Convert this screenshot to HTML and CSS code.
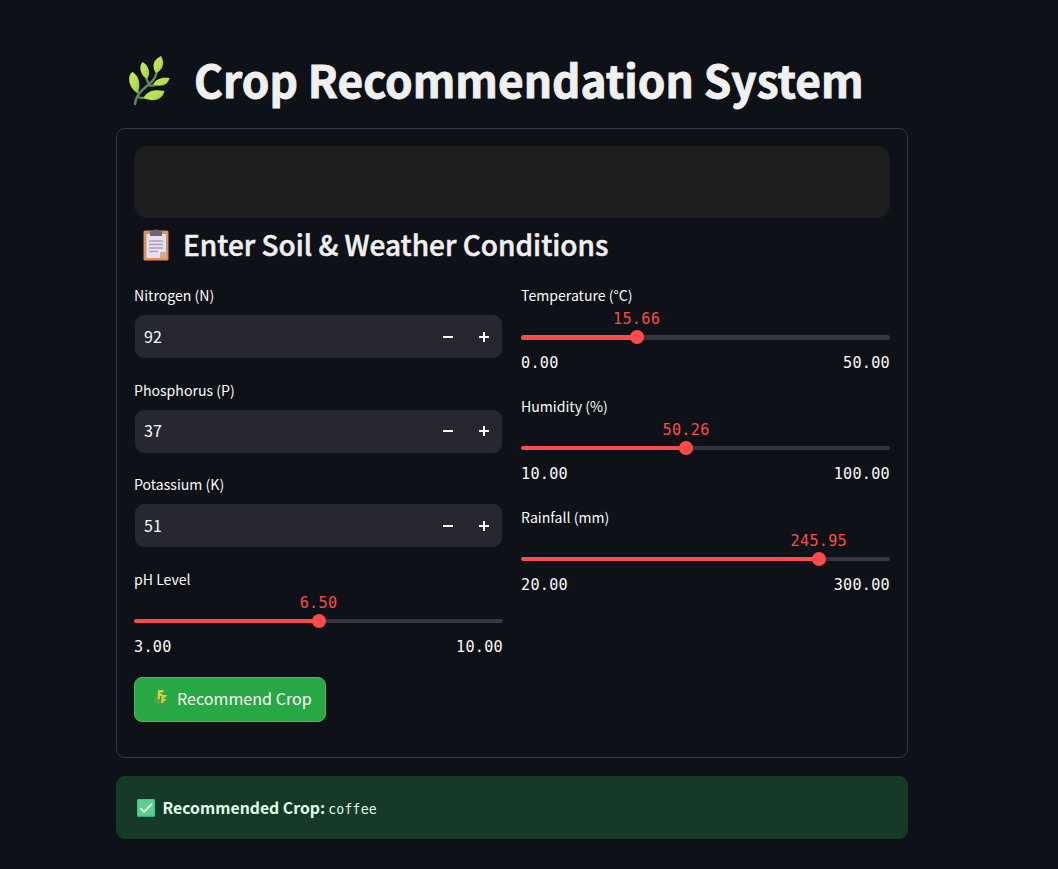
FILE: index.html
```html
<!DOCTYPE html>
<html lang="en">
<head>
<meta charset="utf-8">
<title>Crop Recommendation System</title>
<link rel="stylesheet" href="styles.css">
</head>
<body>
<main class="page">
  <header class="title">
    <svg class="title-icon" viewBox="0 0 42 50" aria-hidden="true">
      <defs>
        <linearGradient id="leaf" x1="0" y1="0" x2="1" y2="1"><stop offset="0" stop-color="#c4ea60"/><stop offset=".6" stop-color="#b4e050"/><stop offset="1" stop-color="#8cc83c"/></linearGradient>
      </defs>
      <g fill="none" stroke="#5f8761" stroke-width="2.4" stroke-linecap="round">
        <path d="M7 48C8 39 14 34 20 29C26 25 28 20 29 15"/>
        <path d="M11 38Q10 37 9 34M21 28Q19 25 18 21M20 29Q25 31 29 28M10 41Q14 43 18 41"/>
      </g>
      <g fill="url(#leaf)">
        <path d="M4.500 16C-1 19 0 31 9 37C13 32 12 20 4.500 16Z"/>
        <path d="M14.500 6C10 11 13 20 19 23C23 18 21 9 14.500 6Z"/>
        <path d="M33 0C24 4 24 12 28 17C35 14 37 7 33 0Z"/>
        <path d="M41.500 22C33 21 28 23 25 28.500C32 31 40 30 41.500 22Z"/>
        <path d="M36.500 35C26 33 19 35 15.500 42C24 46 34 45 36.500 35Z"/>
      </g>
    </svg>
    <h1 class="title-text">Crop Recommendation System</h1>
  </header>

  <section class="card">
    <div class="banner"></div>
    <div class="subtitle">
      <svg class="subtitle-icon" viewBox="0 0 26 32" aria-hidden="true">
        <rect x=".5" y="1.5" width="25" height="30" rx="1.5" fill="#d99262"/>
        <path d="M3.5 5H23V23L17 29H3.500Z" fill="#e6e0ef"/>
        <path d="M23 23L17 29V23Z" fill="#c3acbd"/>
        <path d="M17 29.500L23.500 23V29.500Z" fill="#eda568"/>
        <path d="M7 3.500Q7 2 9 2H11Q11 .3 13 .3T15 2H17Q19 2 19 3.500V7H7Z" fill="#68647a"/>
        <path d="M6 12H20M6 15.500H20M6 19H20M6 22.500H15" stroke="#a8a1b9" stroke-width="1.300"/>
      </svg>
      <h2 class="subtitle-text">Enter Soil &amp; Weather Conditions</h2>
    </div>

    <div class="columns">
      <div class="column">
        <div class="number">
          <div class="label">Nitrogen (N)</div>
          <div class="number-box"><span class="number-value">92</span><i class="step minus"></i><i class="step plus"></i></div>
        </div>
        <div class="number">
          <div class="label">Phosphorus (P)</div>
          <div class="number-box"><span class="number-value">37</span><i class="step minus"></i><i class="step plus"></i></div>
        </div>
        <div class="number">
          <div class="label">Potassium (K)</div>
          <div class="number-box"><span class="number-value">51</span><i class="step minus"></i><i class="step plus"></i></div>
        </div>
        <div class="slider" style="--pos:50%">
          <div class="label">pH Level</div>
          <div class="track"><span class="value">6.50</span><i class="thumb"></i></div>
          <div class="range"><span>3.00</span><span>10.00</span></div>
        </div>
      </div>
      <div class="column">
        <div class="slider" style="--pos:31.32%">
          <div class="label">Temperature (°C)</div>
          <div class="track"><span class="value">15.66</span><i class="thumb"></i></div>
          <div class="range"><span>0.00</span><span>50.00</span></div>
        </div>
        <div class="slider" style="--pos:44.73%">
          <div class="label">Humidity (%)</div>
          <div class="track"><span class="value">50.26</span><i class="thumb"></i></div>
          <div class="range"><span>10.00</span><span>100.00</span></div>
        </div>
        <div class="slider" style="--pos:80.7%">
          <div class="label">Rainfall (mm)</div>
          <div class="track"><span class="value">245.95</span><i class="thumb"></i></div>
          <div class="range"><span>20.00</span><span>300.00</span></div>
        </div>
      </div>
    </div>

    <button class="submit">
      <svg class="submit-icon" viewBox="0 0 14 19" aria-hidden="true">
        <path d="M4.500 16V9M1.500 9V14" fill="none" stroke="#6f9e4c" stroke-width="1.800"/>
        <path d="M9 18V11M12 12V15Q12 16 9 17" fill="none" stroke="#4a8f70" stroke-width="2"/>
        <path d="M4 1H10L9 3.500H6.500V5H9L8 7H6V10H3.500Z" fill="#dcc944"/>
        <path d="M7.500 6H13L12 8.500H10V10H12L11 12H9.500V14H7Z" fill="#d9c83c"/>
      </svg>
      <span class="submit-text">Recommend Crop</span>
    </button>
  </section>

  <section class="alert">
    <svg class="alert-icon" viewBox="0 0 18 18" aria-hidden="true">
      <rect width="18" height="18" rx="1.500" fill="#3da978"/>
      <rect x=".5" y=".3" width="17" height="16.500" rx="1.200" fill="#58d092"/>
      <path d="M3.500 9.200L7 13L15 4.800" fill="none" stroke="#f4fff5" stroke-width="1.800"/>
    </svg>
    <strong class="alert-title">Recommended Crop:</strong>
    <code class="alert-value">coffee</code>
  </section>
</main>
</body>
</html>
```
FILE: styles.css
```css
* { box-sizing: border-box; }
body {
  margin: 0;
  background: #0e1117;
  color: #fafafa;
  font-family: "Noto Sans CJK SC", "Noto Sans", sans-serif;
  font-size: 14px;
}
h1, h2 { margin: 0; }
svg { display: block; flex: none; }
.page { width: 792px; margin-left: 116px; padding-top: 48px; height: 869px; overflow: hidden; }

.title { display: flex; align-items: center; height: 80px; padding-left: 12px; gap: 24px; color: #f0f0f0; }
.title-icon { width: 42px; height: 50px; margin-top: -15px; }
.title-text {
  font-size: 44.2px; font-weight: 700; line-height: 64px; margin-top: -19px;
  white-space: nowrap; -webkit-text-stroke: .9px #f0f0f0;
}

.card { height: 630px; padding: 17px; border: 1px solid #383a42; border-radius: 9px; }
.banner { height: 72px; background: #1e1e1e; border-radius: 14px; }
.subtitle { display: flex; align-items: center; height: 54px; padding-left: 9px; gap: 14px; color: #f0f0f0; }
.subtitle-icon { width: 26px; height: 32px; margin-top: -1px; }
.subtitle-text {
  font-size: 28px; font-weight: 500; line-height: 40px; margin-top: -2px;
  white-space: nowrap; -webkit-text-stroke: .5px #f0f0f0;
}

.columns { display: grid; grid-template-columns: 369px 369px; gap: 18px; height: 387px; padding-top: 11px; }
.label { height: 24px; line-height: 24px; font-size: 14.1px; white-space: nowrap; }
.number { height: 94.5px; }
.number-box {
  display: flex; align-items: center; height: 43px; margin: 8px 1px 0;
  padding-left: 9px; background: #262730; border-radius: 9px; font-size: 16px;
}
.number-value { flex: 1; margin-top: -2px; }
.step { position: relative; width: 36px; height: 43px; }
.step::before, .step.plus::after {
  content: ""; position: absolute; background: #fafafa;
  left: 13px; top: 20.5px; width: 10px; height: 2px;
}
.step.plus::after { left: 17px; top: 16.5px; width: 2px; height: 10px; }

.slider { height: 110.8px; }
.track {
  position: relative; height: 4.5px; margin-top: 28px; border-radius: 3px;
  background: linear-gradient(to right, #ff4b4b var(--pos), #363840 var(--pos));
}
.thumb {
  position: absolute; left: var(--pos); top: -5px; width: 14px; height: 14px;
  margin-left: -7px; border-radius: 50%; background: #ff4b4b;
}
.value, .range, .alert-value { font-family: "DejaVu Sans Mono", monospace; }
.value {
  position: absolute; left: var(--pos); top: -25px; transform: translateX(-50%);
  font-size: 15.2px; letter-spacing: .25px; line-height: 18px; color: #ff4b4b;
}
.range {
  display: flex; justify-content: space-between; margin-top: 14.5px;
  font-size: 15.2px; letter-spacing: .25px; line-height: 18px;
}

.submit {
  display: flex; align-items: center; gap: 9px; width: 192px; height: 45px; margin: 18px 0 0;
  padding: 0 0 0 19px; border: 1px solid #4dba66; border-radius: 8px;
  background: #28a745; color: #fafafa; font-family: inherit; font-size: 16.1px; white-space: nowrap;
}
.submit-icon { width: 14px; height: 19px; margin-top: -3px; }
.submit-text { margin-top: -3px; }

.alert {
  display: flex; align-items: center; height: 63px; margin-top: 18px; padding-left: 21px;
  border-radius: 9px; background: #173928; color: #dffde9;
}
.alert-icon { width: 18px; height: 18px; }
.alert-title { margin: -1px 0 0 7.5px; font-size: 15.8px; font-weight: 600; }
.alert-value { margin-left: 3px; font-size: 13.2px; letter-spacing: .2px; padding-top: 3px; }
```
